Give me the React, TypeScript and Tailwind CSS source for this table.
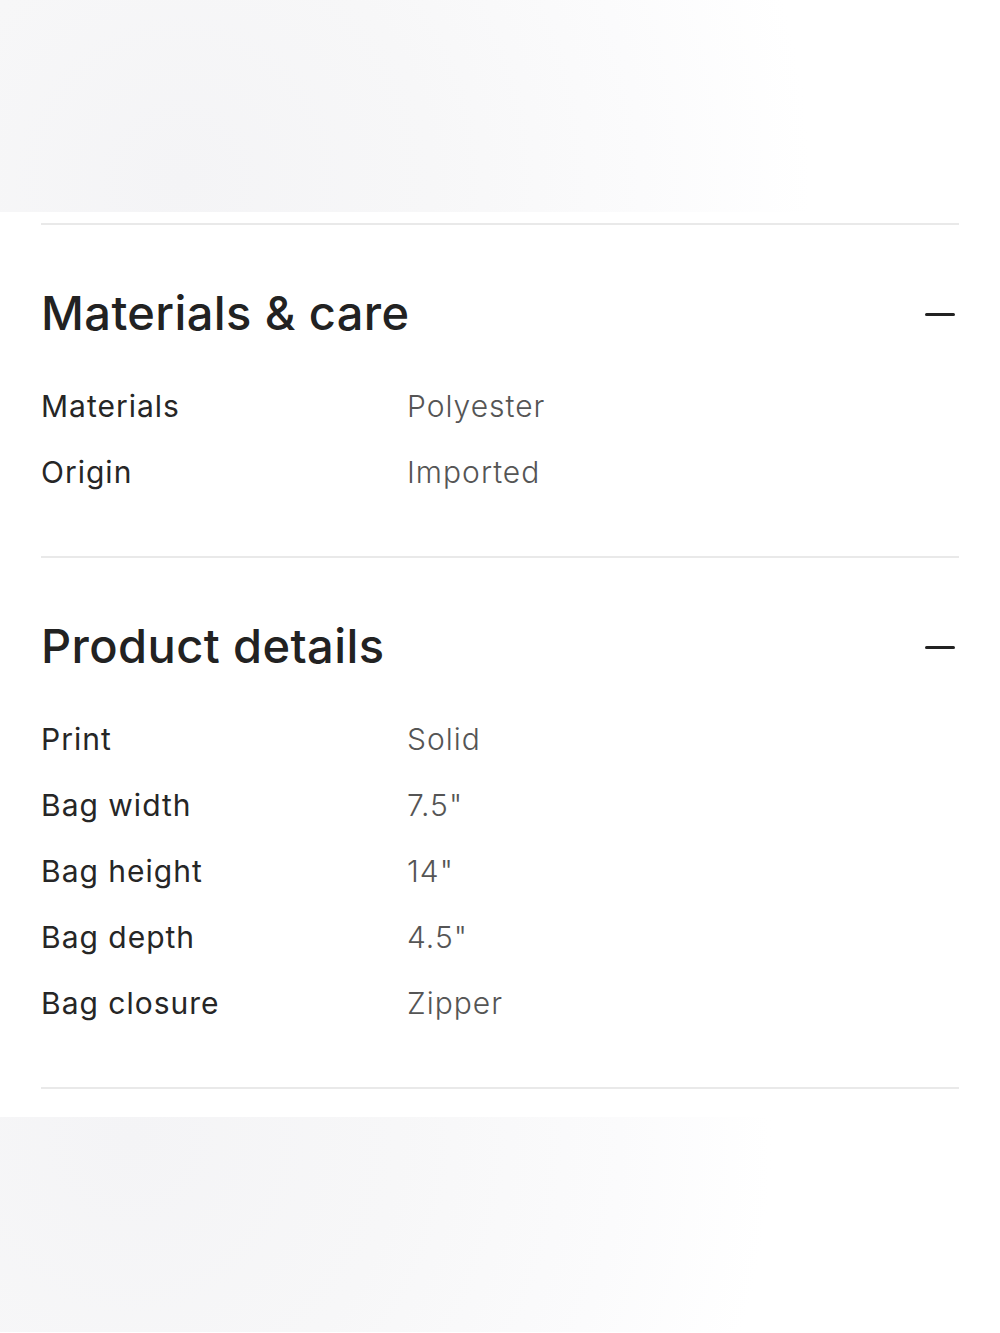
const SECTIONS = [
  {
    title: "Materials & care",
    rows: [
      ["Materials", "Polyester"],
      ["Origin", "Imported"],
    ],
  },
  {
    title: "Product details",
    rows: [
      ["Print", "Solid"],
      ["Bag width", '7.5"'],
      ["Bag height", '14"'],
      ["Bag depth", '4.5"'],
      ["Bag closure", "Zipper"],
    ],
  },
];

function Section({ title, rows }: { title: string; rows: string[][] }) {
  return (
    <section className="border-t-2 border-[#e9e9e9] pt-[58px] pb-[51px]">
      <div className="flex h-[60px] items-center justify-between">
        <h2 className="text-[47px] font-medium leading-[60px] tracking-[0.4px] text-[#222222]">{title}</h2>
        <span className="mr-[4px] mt-[3px] h-[3px] w-[30px] rounded-full bg-[#222222]" aria-hidden="true" />
      </div>
      <dl className="mt-[30px]">
        {rows.map(([label, value]) => (
          <div key={label} className="grid grid-cols-[366px_1fr] text-[30px] leading-[66px] tracking-[1px]">
            <dt className="text-[#262626]">{label}</dt>
            <dd className="font-light text-[#555555]">{value}</dd>
          </div>
        ))}
      </dl>
    </section>
  );
}

export default function App() {
  return (
    <div className="min-h-[1333px] bg-white font-['Inter',sans-serif]">
      <div className="h-[212px] bg-[radial-gradient(circle_at_18%_85%,#f4f4f6_0%,#f7f7f8_30%,#fbfbfc_55%,#ffffff_75%)]" />
      <div className="px-[41px] pt-[11px]">
        {SECTIONS.map((s) => (
          <Section key={s.title} title={s.title} rows={s.rows} />
        ))}
        <div className="border-t-2 border-[#e9e9e9]" />
      </div>
      <div className="mt-[28px] h-[215px] bg-[radial-gradient(circle_at_13%_10%,#f4f4f6_0%,#f7f7f8_30%,#fbfbfc_55%,#ffffff_72%)]" />
    </div>
  );
}
